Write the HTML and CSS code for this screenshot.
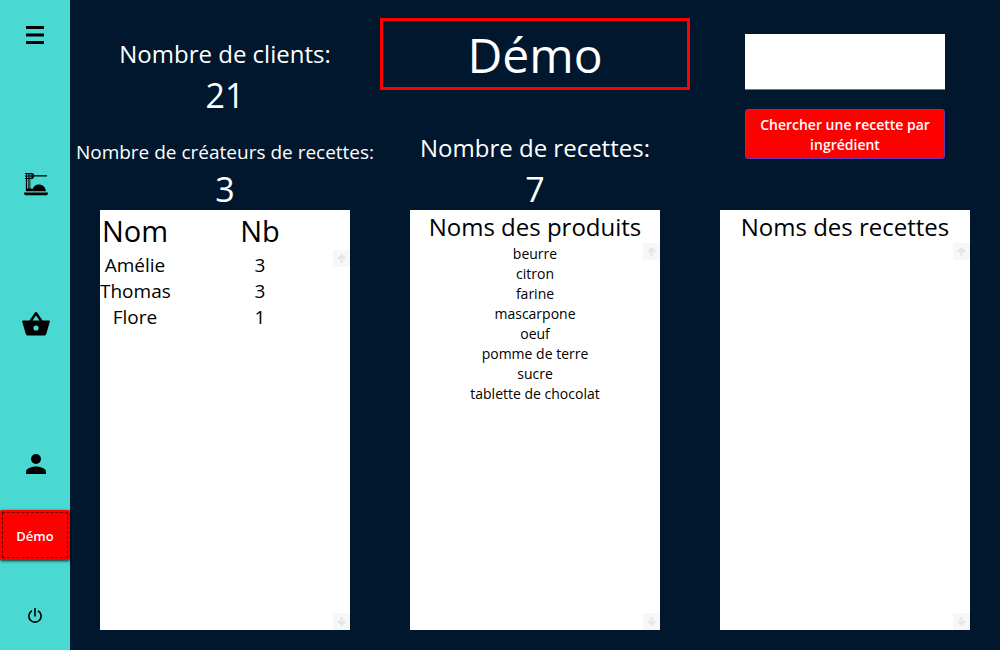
FILE: index.html
```html
<!DOCTYPE html>
<html lang="fr">
<head>
<meta charset="utf-8">
<meta name="viewport" content="width=device-width, initial-scale=1">
<title>Démo</title>
<link rel="stylesheet" href="styles.css">
</head>
<body class="app">
<nav class="sidebar" aria-label="Navigation">
  <button class="nav-button centered" type="button" aria-label="Menu">
    <svg width="18" height="18" viewBox="0 0 18 18"><path d="M0 0h18v3H0zM0 7.500h18v3H0zM0 15h18v3H0z"/></svg>
  </button>
  <button class="nav-button" type="button" aria-label="Recettes">
    <svg width="24" height="24" viewBox="0 0 24 24">
      <path d="M1 1.500h7c2 0 2 5 0 5H1" fill="none" stroke="#000" stroke-width="1.200"/>
      <path d="M1 4h9" fill="none" stroke="#000" stroke-width="1"/>
      <path d="M9 3.200h14v1.300H9z"/>
      <path d="M2.500 1v18M8 1.500v5" fill="none" stroke="#000" stroke-width="1.300"/>
      <path d="M4.700 1v17M5.900 1v17" fill="none" stroke="#000" stroke-width=".8"/>
      <path d="M2 19.200V17.500c2-1.500 4-1.500 6.500-.5 1-2.500 3.500-4.500 6-4.500 4 0 7 2.500 7.500 6.700zM0 20.500h24c0 2-1 2.800-2 2.800H2.500C1 23.300 0 22.500 0 20.500z"/>
    </svg>
  </button>
  <button class="nav-button" type="button" aria-label="Produits">
    <svg width="28" height="24" viewBox="0 0 28 24"><path fill-rule="evenodd" d="M20.500 8.500 15.100.600c-.5-.8-1.700-.8-2.200 0L7.500 8.500H1.200C.5 8.500 0 9 .2 9.800l3.500 12c.3 1.200 1.100 1.800 2.300 1.800h16c1.200 0 2-.6 2.300-1.800l3.500-12c.2-.8-.3-1.300-1-1.300zM10.500 8.500 14 3.500l3.500 5zM14 13.400a2.600 2.600 0 1 0 0 5.200 2.600 2.600 0 0 0 0-5.200z"/></svg>
  </button>
  <button class="nav-button" type="button" aria-label="Profil">
    <svg width="20" height="20" viewBox="0 0 20 20"><circle cx="10" cy="5" r="5"/><path d="M0 20v-2.500C0 14.200 6.700 12.500 10 12.500s10 1.700 10 5V20z"/></svg>
  </button>
  <button class="demo-button" type="button"><span class="focus-ring">Démo</span></button>
  <button class="nav-button centered" type="button" aria-label="Quitter">
    <svg width="14" height="15" viewBox="0 0 14 15"><path d="M7 0v8.500M4 2.700a6.100 6.100 0 1 0 6 0" fill="none" stroke="#000" stroke-width="1.600"/></svg>
  </button>
</nav>
<main class="board">
  <section class="column">
    <div class="summary">
      <div class="stat"><p class="stat-label">Nombre de clients:</p><p class="stat-value">21</p></div>
      <div class="stat"><p class="stat-label small">Nombre de créateurs de recettes:</p><p class="stat-value">3</p></div>
    </div>
    <div class="panel">
      <table class="creators">
        <thead><tr><th class="name-cell" scope="col">Nom</th><th scope="col">Nb</th></tr></thead>
        <tbody>
          <tr><td>Amélie</td><td>3</td></tr>
          <tr><td>Thomas</td><td>3</td></tr>
          <tr><td>Flore</td><td>1</td></tr>
        </tbody>
      </table>
      <div class="scroll-rail tall-head">
        <button class="scroll-button" type="button" aria-label="Défiler vers le haut"><svg width="9" height="9" viewBox="0 0 9 9"><path d="M4.500 9V1.500M1 5l3.500-3.500L8 5"/></svg></button>
        <button class="scroll-button" type="button" aria-label="Défiler vers le bas"><svg width="9" height="9" viewBox="0 0 9 9"><path d="M4.500 0v7.500M1 4l3.500 3.500L8 4"/></svg></button>
      </div>
    </div>
  </section>
  <section class="column">
    <div class="summary titled">
      <h1 class="title">Démo</h1>
      <div class="stat"><p class="stat-label">Nombre de recettes:</p><p class="stat-value">7</p></div>
    </div>
    <div class="panel">
      <h2 class="panel-title">Noms des produits</h2>
      <ul class="items">
        <li>beurre</li><li>citron</li><li>farine</li><li>mascarpone</li><li>oeuf</li><li>pomme de terre</li><li>sucre</li><li>tablette de chocolat</li>
      </ul>
      <div class="scroll-rail">
        <button class="scroll-button" type="button" aria-label="Défiler vers le haut"><svg width="9" height="9" viewBox="0 0 9 9"><path d="M4.500 9V1.500M1 5l3.500-3.500L8 5"/></svg></button>
        <button class="scroll-button" type="button" aria-label="Défiler vers le bas"><svg width="9" height="9" viewBox="0 0 9 9"><path d="M4.500 0v7.500M1 4l3.500 3.500L8 4"/></svg></button>
      </div>
    </div>
  </section>
  <section class="column">
    <form class="summary search">
      <input class="search-input" type="text" aria-label="Ingrédient">
      <button class="search-button" type="button">Chercher une recette par ingrédient</button>
    </form>
    <div class="panel">
      <h2 class="panel-title">Noms des recettes</h2>
      <div class="scroll-rail">
        <button class="scroll-button" type="button" aria-label="Défiler vers le haut"><svg width="9" height="9" viewBox="0 0 9 9"><path d="M4.500 9V1.500M1 5l3.500-3.500L8 5"/></svg></button>
        <button class="scroll-button" type="button" aria-label="Défiler vers le bas"><svg width="9" height="9" viewBox="0 0 9 9"><path d="M4.500 0v7.500M1 4l3.500 3.500L8 4"/></svg></button>
      </div>
    </div>
  </section>
</main>
</body>
</html>
```
FILE: styles.css
```css
* { box-sizing: border-box; }

.app {
  margin: 0;
  min-height: 100vh;
  display: grid;
  grid-template-columns: 70px 1fr;
  background: #00172e;
  color: #fff;
  font-family: "Open Sans", "Noto Sans", sans-serif;
}

button { font: inherit; cursor: pointer; }
h1, h2, p, ul { margin: 0; padding: 0; font-weight: 400; }
svg { display: block; }

.sidebar {
  display: grid;
  grid-template-rows: 70fr 140fr 140fr 140fr 90fr 70fr;
  background: #4ad9d2;
}

.nav-button {
  display: flex;
  align-items: center;
  justify-content: center;
  align-self: end;
  height: 52px;
  padding: 0 0 0 2px;
  border: 0;
  background: none;
}

.nav-button.centered { align-self: center; padding: 0; }

.demo-button {
  align-self: center;
  height: 50px;
  padding: 2px;
  border: 0;
  border-radius: 2px;
  background: #f00;
  color: #fff;
  font-size: 13px;
  font-weight: 600;
  box-shadow: 0 1px 3px rgba(0, 0, 0, 0.8);
}

.focus-ring {
  display: flex;
  align-items: center;
  justify-content: center;
  height: 100%;
  padding-top: 2px;
  border: 1px dashed #600;
}

.board {
  display: grid;
  grid-template-columns: repeat(3, 1fr);
}

.column { display: flex; flex-direction: column; padding-bottom: 20px; }

.summary {
  display: flex;
  flex-direction: column;
  justify-content: space-between;
  height: 210px;
  padding-top: 34px;
}

.summary.titled { padding-top: 18px; }

.stat { text-align: center; white-space: nowrap; }
.stat-label { font-size: 24px; line-height: 40px; }
.stat-label.small { font-size: 19px; line-height: 32px; }
.stat-value { font-size: 34px; line-height: 42px; }

.title {
  padding-top: 2px;
  border: 3px solid #f00;
  font-size: 48px;
  line-height: 64px;
  text-align: center;
}

.summary.search {
  justify-content: flex-start;
  gap: 19px;
  padding: 34px 55px 0;
}

.search-input {
  width: 100%;
  height: 56px;
  padding: 0 8px;
  border: 0;
  border-bottom: 1px solid #777;
  border-radius: 0;
  background: #fff;
  font: inherit;
}

.search-button {
  height: 50px;
  padding: 2px 8px 0;
  border: 1px solid #673ab7;
  border-radius: 3px;
  background: #f00;
  color: #fff;
  font-size: 14px;
  font-weight: 600;
  line-height: 20px;
}

.panel {
  position: relative;
  flex: 1;
  margin: 0 30px;
  background: #fff;
  color: #000;
}

.panel-title { font-size: 24px; line-height: 34px; text-align: center; }

.items { list-style: none; font-size: 14px; line-height: 20px; text-align: center; }

.creators { width: 100%; border-collapse: collapse; table-layout: fixed; font-size: 19px; line-height: 26px; }
.creators th, .creators td { padding: 0; text-align: center; }
.creators th { font-size: 29px; font-weight: 400; line-height: 42px; }
.creators .name-cell { width: 28%; }
.creators td { white-space: nowrap; }

.scroll-rail {
  position: absolute;
  top: 33px;
  right: 0;
  bottom: 0;
  display: flex;
  flex-direction: column;
  justify-content: space-between;
}

.scroll-rail.tall-head { top: 40px; }

.scroll-button {
  display: flex;
  align-items: center;
  justify-content: center;
  width: 17px;
  height: 17px;
  padding: 0;
  border: 0;
  background: #f7f7f7;
}

.scroll-button path { fill: none; stroke: #e6e6e6; stroke-width: 2; }
```
